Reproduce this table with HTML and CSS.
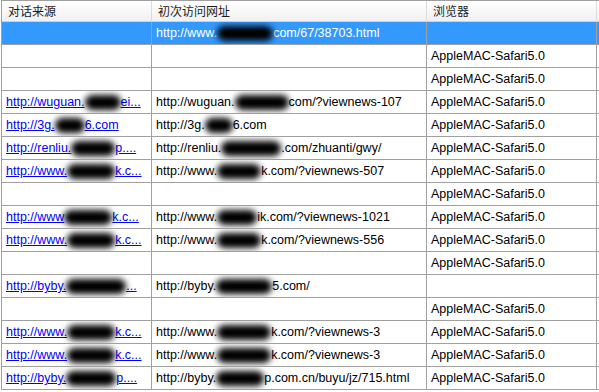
FILE: index.html
```html
<!DOCTYPE html>
<html lang="zh-CN">
<head>
<meta charset="utf-8">
<title>访问记录</title>
<link rel="stylesheet" href="styles.css">
</head>
<body>
<div class="grid">
  <div class="row head">
    <div class="cell">对话来源</div>
    <div class="cell">初次访问网址</div>
    <div class="cell">浏览器</div>
    <div class="cell"></div>
  </div>
  <div class="row sel">
    <div class="cell"></div>
    <div class="cell">http://www.<span class="blob b56"></span>com/67/38703.html</div>
    <div class="cell"></div>
    <div class="cell"></div>
  </div>
  <div class="row">
    <div class="cell"></div><div class="cell"></div>
    <div class="cell">AppleMAC-Safari5.0</div><div class="cell"></div>
  </div>
  <div class="row">
    <div class="cell"></div><div class="cell"></div>
    <div class="cell">AppleMAC-Safari5.0</div><div class="cell"></div>
  </div>
  <div class="row">
    <div class="cell"><a href="#">http://wuguan.<span class="blob b36"></span>ei...</a></div>
    <div class="cell">http://wuguan.<span class="blob b54"></span>com/?viewnews-107</div>
    <div class="cell">AppleMAC-Safari5.0</div><div class="cell"></div>
  </div>
  <div class="row">
    <div class="cell"><a href="#">http://3g.<span class="blob b30"></span>6.com</a></div>
    <div class="cell">http://3g.<span class="blob b28"></span>6.com</div>
    <div class="cell">AppleMAC-Safari5.0</div><div class="cell"></div>
  </div>
  <div class="row">
    <div class="cell"><a href="#">http://renliu.<span class="blob b44"></span>p....</a></div>
    <div class="cell">http://renliu.<span class="blob b60"></span>.com/zhuanti/gwy/</div>
    <div class="cell">AppleMAC-Safari5.0</div><div class="cell"></div>
  </div>
  <div class="row">
    <div class="cell"><a href="#">http://www.<span class="blob b48"></span>k.c...</a></div>
    <div class="cell">http://www.<span class="blob b44"></span>k.com/?viewnews-507</div>
    <div class="cell">AppleMAC-Safari5.0</div><div class="cell"></div>
  </div>
  <div class="row">
    <div class="cell"></div><div class="cell"></div>
    <div class="cell">AppleMAC-Safari5.0</div><div class="cell"></div>
  </div>
  <div class="row">
    <div class="cell"><a href="#">http://www<span class="blob b48"></span>k.c...</a></div>
    <div class="cell">http://www.<span class="blob b40"></span>ik.com/?viewnews-1021</div>
    <div class="cell">AppleMAC-Safari5.0</div><div class="cell"></div>
  </div>
  <div class="row">
    <div class="cell"><a href="#">http://www.<span class="blob b48"></span>k.c...</a></div>
    <div class="cell">http://www.<span class="blob b44"></span>k.com/?viewnews-556</div>
    <div class="cell">AppleMAC-Safari5.0</div><div class="cell"></div>
  </div>
  <div class="row">
    <div class="cell"></div><div class="cell"></div>
    <div class="cell">AppleMAC-Safari5.0</div><div class="cell"></div>
  </div>
  <div class="row">
    <div class="cell"><a href="#">http://byby.<span class="blob b60"></span>...</a></div>
    <div class="cell">http://byby.<span class="blob b56"></span>5.com/</div>
    <div class="cell"></div><div class="cell"></div>
  </div>
  <div class="row">
    <div class="cell"></div><div class="cell"></div>
    <div class="cell">AppleMAC-Safari5.0</div><div class="cell"></div>
  </div>
  <div class="row">
    <div class="cell"><a href="#">http://www.<span class="blob b48"></span>k.c...</a></div>
    <div class="cell">http://www.<span class="blob b54"></span>k.com/?viewnews-3</div>
    <div class="cell">AppleMAC-Safari5.0</div><div class="cell"></div>
  </div>
  <div class="row">
    <div class="cell"><a href="#">http://www.<span class="blob b48"></span>k.c...</a></div>
    <div class="cell">http://www.<span class="blob b54"></span>k.com/?viewnews-3</div>
    <div class="cell">AppleMAC-Safari5.0</div><div class="cell"></div>
  </div>
  <div class="row">
    <div class="cell"><a href="#">http://byby.<span class="blob b50"></span>p....</a></div>
    <div class="cell">http://byby.<span class="blob b48"></span>p.com.cn/buyu/jz/715.html</div>
    <div class="cell">AppleMAC-Safari5.0</div><div class="cell"></div>
  </div>
</div>
</body>
</html>
```

FILE: styles.css
```css
html, body {
  margin: 0;
  padding: 0;
  overflow: hidden;
  background: #fff;
}
body {
  width: 599px;
  height: 392px;
  font-family: "Liberation Sans", "Noto Sans CJK SC", sans-serif;
  font-size: 12.5px;
  color: #000;
}
.grid {
  margin-left: 1px;
  border-left: 1px solid #a0a0a0;
  width: 597px;
}
.row {
  display: grid;
  grid-template-columns: 150px 275px 170px 1fr;
  height: 23px;
}
.cell {
  box-sizing: border-box;
  border-right: 1px solid #a0a0a0;
  border-bottom: 1px solid #a0a0a0;
  padding: 1px 0 0 4px;
  line-height: 21px;
  white-space: nowrap;
  overflow: hidden;
}
.head {
  height: 22px;
  background: linear-gradient(#ffffff, #f0f0f0);
  border-top: 1px solid #a0a0a0;
  box-sizing: border-box;
}
.head .cell {
  border-right: 1px solid #dcdcdc;
  border-bottom: 1px solid #d0d0d0;
  padding: 0 0 0 6px;
  line-height: 20px;
  font-family: "Noto Sans CJK SC", sans-serif;
  font-size: 12px;
  color: #1a1a1a;
}
.sel .cell {
  background: #3399ff;
  color: #fff;
}
a {
  color: #0000ff;
  text-decoration: underline;
}
.blob {
  display: inline-block;
  height: 15px;
  vertical-align: -4px;
  background: #000;
  border-radius: 8px;
  filter: blur(3px);
}
.b28 { width: 28px; }
.b30 { width: 30px; }
.b36 { width: 36px; }
.b40 { width: 40px; }
.b44 { width: 44px; }
.b48 { width: 48px; }
.b50 { width: 50px; }
.b54 { width: 54px; }
.b56 { width: 56px; }
.b60 { width: 60px; }
```
